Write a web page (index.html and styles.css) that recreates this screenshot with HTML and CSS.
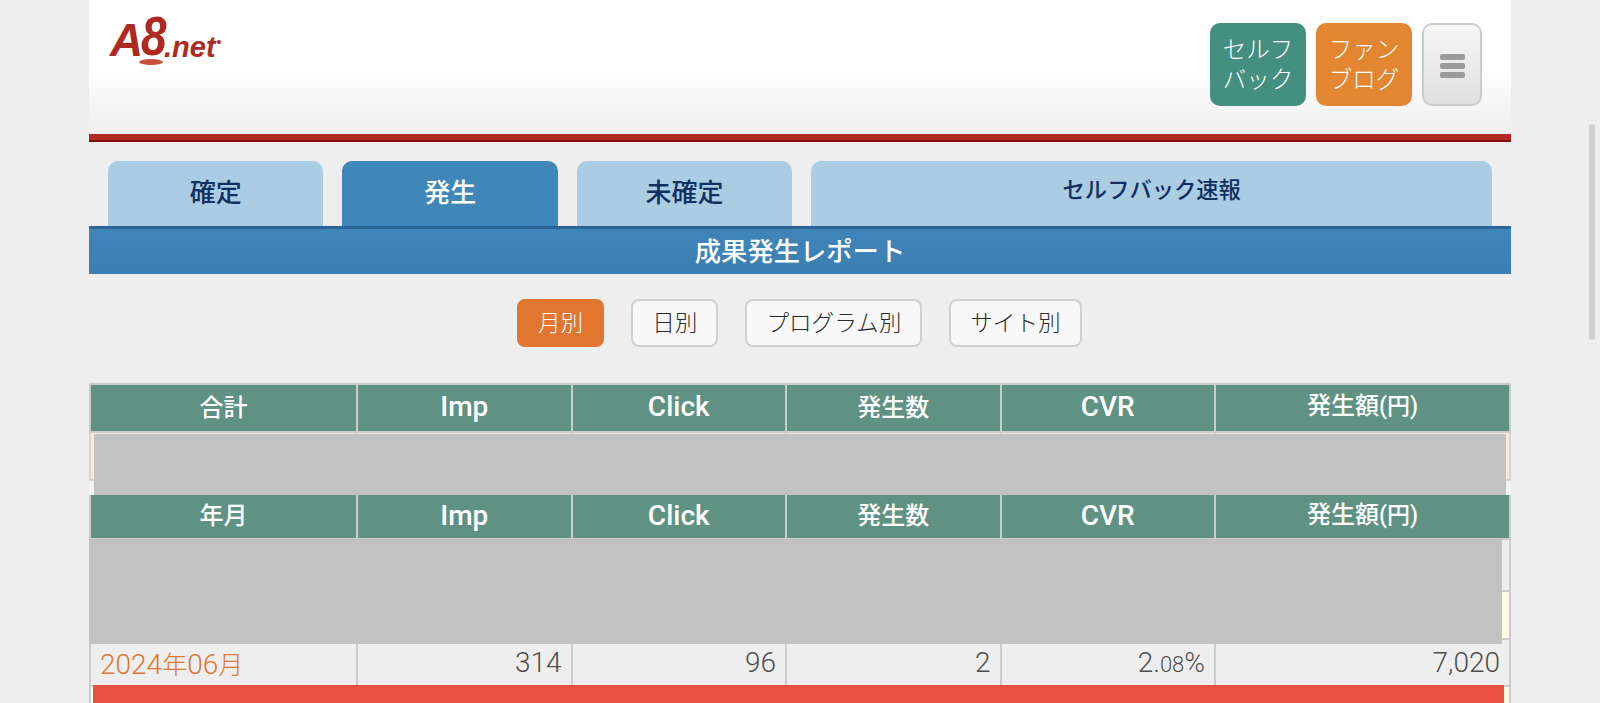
FILE: index.html
```html
<!DOCTYPE html>
<html lang="ja">
<head>
<meta charset="utf-8">
<title>成果発生レポート</title>
<link rel="stylesheet" href="styles.css">
</head>
<body>
<div class="page">
  <header class="site-header">
    <a class="logo" href="#"><span class="logo-a">A</span><span class="logo-8">8</span><span class="logo-net">.net</span><span class="logo-dot"></span><span class="logo-shadow"></span></a>
    <nav class="head-actions">
      <a class="head-btn green" href="#">セルフ<br>バック</a>
      <a class="head-btn orange" href="#">ファン<br>ブログ</a>
      <button class="menu-btn" type="button" aria-label="メニュー"><span></span><span></span><span></span></button>
    </nav>
  </header>
  <nav class="tabs">
    <a class="tab" href="#">確定</a>
    <a class="tab active" href="#">発生</a>
    <a class="tab" href="#">未確定</a>
    <a class="tab wide" href="#">セルフバック速報</a>
  </nav>
  <h1 class="title">成果発生レポート</h1>
  <div class="subnav">
    <a class="pill on" href="#">月別</a>
    <a class="pill" href="#">日別</a>
    <a class="pill" href="#">プログラム別</a>
    <a class="pill" href="#">サイト別</a>
  </div>
  <div class="reports">
    <table class="grid total">
      <colgroup><col class="c1"><col class="c2"><col class="c3"><col class="c4"><col class="c5"><col class="c6"></colgroup>
      <tr><th>合計</th><th class="en">Imp</th><th class="en">Click</th><th>発生数</th><th class="en">CVR</th><th>発生額<span class="unit">(円)</span></th></tr>
      <tr class="sum"><td></td><td></td><td></td><td></td><td></td><td></td></tr>
    </table>
    <div class="spacer"></div>
    <table class="grid monthly">
      <colgroup><col class="c1"><col class="c2"><col class="c3"><col class="c4"><col class="c5"><col class="c6"></colgroup>
      <tr><th>年月</th><th class="en">Imp</th><th class="en">Click</th><th>発生数</th><th class="en">CVR</th><th>発生額<span class="unit">(円)</span></th></tr>
      <tr class="r1"><td></td><td></td><td></td><td></td><td></td><td></td></tr>
      <tr class="r2"><td></td><td></td><td></td><td></td><td></td><td></td></tr>
      <tr class="r3">
        <td class="month"><a href="#">2024<span class="jp">年</span>06<span class="jp">月</span></a></td><td>314</td><td>96</td><td>2</td><td>2.<small>08</small>%</td><td>7,020</td>
      </tr>
      <tr class="r2"><td></td><td></td><td></td><td></td><td></td><td></td></tr>
    </table>
    <div class="mask mask-total"></div>
    <div class="mask mask-monthly"></div>
    <div class="alert"></div>
  </div>
</div>
<div class="scroll-thumb"></div>
</body>
</html>
```
FILE: styles.css
```css
html, body {
  margin: 0;
  height: 703px;
  overflow: hidden;
  background: #eeeeee;
}
body {
  font-family: "Liberation Sans", "Noto Sans CJK JP", sans-serif;
  color: #555;
}
a { text-decoration: none; color: inherit; }

.page {
  width: 1422px;
  height: 703px;
  overflow: hidden;
  margin-left: 89px;
}

/* Header */
.site-header {
  height: 134px;
  border-bottom: 8px solid #b02a22;
  background: linear-gradient(#fff 0, #fff 68px, #eeeeee 134px);
  display: flex;
  justify-content: space-between;
  align-items: flex-start;
  position: relative;
}
.site-header::after {
  content: "";
  position: absolute;
  left: 0;
  right: 0;
  top: 140px;
  height: 2px;
  background: #830d08;
}
.logo {
  position: relative;
  display: block;
  width: 120px;
  height: 70px;
  margin-left: 19px;
  color: #ae2a20;
  font-weight: bold;
  font-style: italic;
  font-family: "Liberation Sans", sans-serif;
}
.logo-a {
  position: absolute;
  left: 2px;
  top: 17px;
  font-size: 46px;
  line-height: 46px;
}
.logo-8 {
  position: absolute;
  left: 33px;
  top: 8px;
  font-size: 56px;
  line-height: 56px;
  transform: scaleX(0.82);
  transform-origin: left center;
}
.logo-net {
  position: absolute;
  left: 56px;
  top: 33px;
  font-size: 29px;
  line-height: 29px;
}
.logo-dot {
  position: absolute;
  left: 109px;
  top: 40px;
  width: 4px;
  height: 4px;
  border-radius: 50%;
  background: #ae2a20;
}
.logo-shadow {
  position: absolute;
  left: 31px;
  top: 59px;
  width: 24px;
  height: 6px;
  border-radius: 50%;
  background: #c8503a;
}
.head-actions {
  display: flex;
  gap: 10px;
  margin: 23px 29px 0 0;
}
.head-btn {
  width: 96px;
  height: 83px;
  padding-bottom: 4px;
  border-radius: 10px;
  box-sizing: border-box;
  display: flex;
  align-items: center;
  justify-content: center;
  text-align: center;
  color: #fff;
  font-family: "Noto Sans CJK JP", sans-serif;
  font-size: 23.5px;
  font-weight: 300;
  line-height: 30px;
}
.head-btn.green { background: #458f80; }
.head-btn.orange { background: #e28632; }
.menu-btn {
  width: 60px;
  height: 83px;
  box-sizing: border-box;
  border: 2px solid #cccccc;
  border-radius: 10px;
  background: linear-gradient(#f6f6f6, #e0e0e0);
  display: flex;
  flex-direction: column;
  align-items: center;
  justify-content: center;
  gap: 3px;
  padding: 2px 0 0;
}
.menu-btn span {
  width: 25px;
  height: 6px;
  border-radius: 2px;
  background: #9b9b9b;
}

/* Tabs */
.tabs {
  display: flex;
  gap: 19.2px;
  padding: 19px 19px 0;
}
.tab {
  width: 215.3px;
  height: 65px;
  border-radius: 10px 10px 0 0;
  background: #aacde3;
  color: #11305f;
  font-family: "Noto Sans CJK JP", sans-serif;
  font-size: 26px;
  font-weight: 500;
  line-height: 60px;
  text-align: center;
}
.tab.active {
  background: #3f86b9;
  color: #fff;
}
.tab.wide {
  flex: 1;
  font-size: 22.3px;
  line-height: 54px;
}

.title {
  margin: 0;
  height: 45px;
  border-top: 3px solid #2c6595;
  background: linear-gradient(#3f86ba, #3c7eb2);
  color: #fff;
  font-family: "Noto Sans CJK JP", sans-serif;
  font-size: 26.3px;
  font-weight: 500;
  line-height: 41px;
  text-align: center;
}

/* Sub navigation */
.subnav {
  display: flex;
  gap: 27px;
  padding: 25px 0 36px 428px;
  font-family: "Noto Sans CJK JP", sans-serif;
}
.pill {
  height: 48px;
  box-sizing: border-box;
  padding: 0 19px;
  border: 2px solid #d0d0d0;
  border-radius: 8px;
  background: #f8f8f8;
  color: #2a2a2a;
  font-size: 22.6px;
  font-weight: 300;
  line-height: 41px;
}
.pill.on {
  background: #e27631;
  border-color: #e27631;
  color: #fff;
}

/* Tables */
.reports { position: relative; }
.grid {
  width: 1420px;
  table-layout: fixed;
  border-collapse: collapse;
}
.c1 { width: 267px; }
.c2, .c3, .c4, .c5 { width: 214.5px; }
.c6 { width: 295px; }
.grid th, .grid td {
  line-height: 28px;
  border: 2px solid #cccccc;
}
.grid th {
  padding: 0 0 5px;
  background: #5f9282;
  color: #fff;
  font-family: "Noto Sans CJK JP", sans-serif;
  font-size: 24px;
  font-weight: 500;
  text-align: center;
}
.grid th.en {
  padding-bottom: 2px;
  font-family: "Roboto", sans-serif;
  font-size: 28px;
}
.unit {
  font-family: "Roboto", "Noto Sans CJK JP", sans-serif;
  font-size: 23px;
}
.total th { height: 41px; }
.total th.en { height: 44px; }
.monthly th { height: 38px; border-top: 0; }
.monthly th.en { height: 41px; }
.grid td {
  padding: 0 9px;
  text-align: right;
  font-family: "Roboto", sans-serif;
  font-size: 28px;
  font-weight: 300;
  color: #4e4e4e;
}
.sum td { height: 46px; background: #f3e8e0; border-color: #ddd0c8; }
.spacer { height: 14px; background: #f3f3f3; }
.r1 td { height: 50px; background: #eeeeee; }
.r2 td { height: 46px; background: #fffbe6; }
.grid .r3 td {
  height: 36px;
  padding-top: 9px;
  vertical-align: top;
  background: #eeeeee;
}
.grid .month { text-align: left; color: #dc7630; }
.jp {
  font-family: "Noto Sans CJK JP", sans-serif;
  font-size: 25px;
}
.grid small { font-size: 22px; }

/* Overlays */
.mask {
  position: absolute;
  background: #c2c2c2;
}
.mask-total { left: 5px; top: 51px; width: 1412px; height: 61px; }
.mask-monthly { left: 0; top: 156px; width: 1413px; height: 105px; }
.alert {
  position: absolute;
  left: 4px;
  top: 302px;
  width: 1411px;
  height: 30px;
  background: #eb4f3f;
}
.scroll-thumb {
  position: fixed;
  left: 1589px;
  top: 124px;
  width: 6px;
  height: 216px;
  border-radius: 3px;
  background: #d2d2d2;
}
```
